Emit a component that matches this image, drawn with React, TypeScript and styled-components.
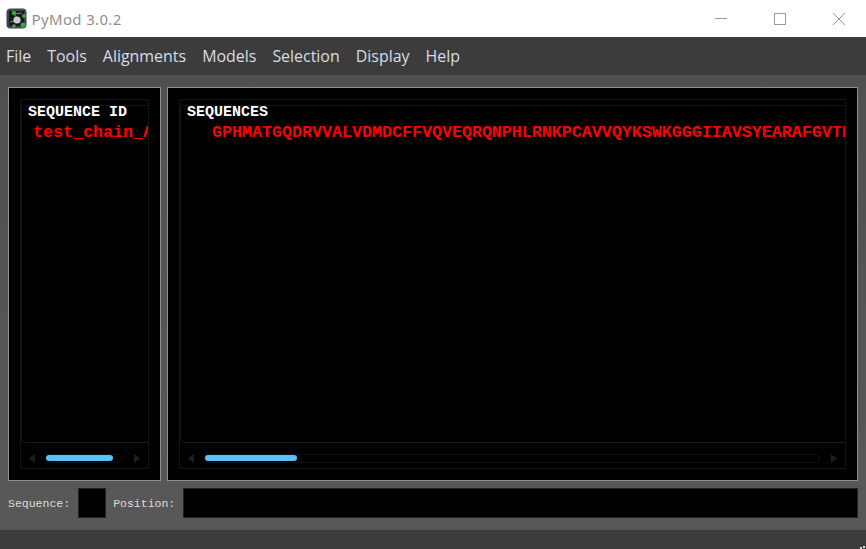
import React from "react";
import styled, { createGlobalStyle } from "styled-components";

const Global = createGlobalStyle`
  html, body { margin: 0; padding: 0; background: #555; }
  body { width: 866px; height: 549px; overflow: hidden; }
`;

const Win = styled.div`
  width: 866px; height: 549px; display: flex; flex-direction: column;
  font-family: "Noto Sans", "Open Sans", sans-serif; background: #555;
`;
const TitleBar = styled.header`
  height: 37px; background: #fff; display: flex; align-items: center; flex: none; padding-left: 6px;
`;
const AppName = styled.span`
  font-size: 15px; color: #8f8f8f; margin-left: 4.5px; font-family: "Noto Sans", sans-serif; letter-spacing: .35px;
`;
const Controls = styled.div`margin-left: auto; display: flex; height: 100%; padding-right: 21px; gap: 47px; align-items: center;`;
const Ctl = styled.svg`display: block;`;
const MenuBar = styled.nav`
  height: 38px; background: #3c3c3c; display: flex; align-items: center; flex: none; padding-left: 6px; gap: 16px;
`;
const MenuItem = styled.span`font-size: 15.95px; color: #d7dde3; font-family: "Open Sans", sans-serif;`;
const Main = styled.main`
  flex: 1; display: flex; flex-direction: column; padding: 12px 8px 0 8px; min-height: 0;
  background: linear-gradient(#505050, #585858);
`;
const Panels = styled.div`display: flex; gap: 6px; height: 394px; flex: none;`;
const Panel = styled.section<{ $w?: number }>`
  ${p => (p.$w ? `width:${p.$w}px;flex:none;` : "flex:1;")}
  background: #000; border: 1px solid #8b9096; box-sizing: border-box; padding: 11px; display: flex; min-width: 0;
`;
const Frame = styled.div`
  flex: 1; border: 1px solid #141414; display: flex; flex-direction: column; padding-top: 5px; min-width: 0;
`;
const View = styled.div`
  flex: 1; position: relative; border-top: 1px solid #141414; border-bottom: 1px solid #1c1c1c;
  border-left: 1px solid #141414; border-bottom-left-radius: 5px; overflow: hidden; min-height: 0;
`;
const Head = styled.div<{ $w: number }>`
  position: absolute; left: -1px; top: -1px; width: ${p => p.$w}px; height: 17px; background: #000;
  font: bold 15px/15px "Liberation Mono", monospace; color: #fff; padding-left: 7px; box-sizing: border-box;
`;
const Seq = styled.div<{ $x: number }>`
  position: absolute; top: 17px; left: ${p => p.$x}px; right: 0; overflow: hidden; white-space: nowrap;
  font: bold 16.67px/20px "Liberation Mono", monospace; color: #f00;
`;
const Bar = styled.div`
  height: 25px; box-sizing: border-box; flex: none; display: flex; align-items: center; padding: 5px 8px 0 8px;
`;
const Track = styled.div`
  flex: 1; height: 7px; margin: 0 11px 0 10px; border: 1px solid #101010; border-radius: 5px; display: flex; align-items: center;
`;
const Thumb = styled.div<{ $w: number }>`
  width: ${p => p.$w}px; height: 6px; background: #5ac2f8; border-radius: 3px;
`;
const Footer = styled.div`display: flex; align-items: center; margin-top: 7px; height: 30px; flex: none;`;
const Label = styled.span<{ $gap: number; $lead?: number }>`
  font: 11.5px "Liberation Mono", monospace; color: #dcdcdc; white-space: nowrap;
  margin: 0 ${p => p.$gap}px 0 ${p => p.$lead ?? 0}px;
`;
const Field = styled.div<{ $w?: number }>`
  ${p => (p.$w ? `width:${p.$w}px;flex:none;` : "flex:1;")}
  height: 30px; background: #000; border: 1px solid #222; box-sizing: border-box;
`;
const Status = styled.footer`height: 19px; flex: none; background: #3c3c3c; position: relative;`;
const Grip = styled.svg`position: absolute; right: 0; bottom: 0;`;

const Logo = () => (
  <svg width="21" height="21" viewBox="0 0 21 21">
    <rect x="0.5" y="0.5" width="20" height="20" rx="4" fill="#3c4650" />
    <rect x="3" y="3" width="15" height="15" fill="#181a1c" />
    <path d="M8 6L14 14M4 14l9-2M8 6l8-1" stroke="#7a8a78" strokeWidth="1" />
    <circle cx="8" cy="5" r="2.2" fill="#38a838" />
    <circle cx="18" cy="8" r="2" fill="#38a838" />
    <circle cx="17" cy="17" r="2.5" fill="#38a838" />
    <circle cx="8" cy="18" r="1.8" fill="#38a838" />
    <circle cx="11" cy="12" r="3.6" fill="#c9cdd0" />
  </svg>
);
const Arrow = ({ dir }: { dir: "l" | "r" }) => (
  <svg width="6" height="9" viewBox="0 0 6 9">
    <path d={dir === "l" ? "M6 0v9L0 4.5z" : "M0 0v9l6-4.5z"} fill="#1e1e1e" />
  </svg>
);

const SEQ = "GPHMATGQDRVVALVDMDCFFVQVEQRQNPHLRNKPCAVVQYKSWKGGGIIAVSYEARAFGVTRSMWADDAKKLCPDLLLAQVRESRGKANLTKYREASVEVMEIMSRFAVIERASIDEAYVDLTSAVQERLQKLQGQPISADLLPSTYIEGLPQGPTTAEETVQKEGMRKQGLFQWLDSLQIDNLTSPDLQLTVGAVIVEEMRAAIERETGFQCSAGISHNKVLAKLACGLNKPNRQTLVSHGSVPQLFSQMPIRKIRSLGGKLGASVIEILGIEYMGELTQFTESQLQSHFGEKNGSWLYAMCRGIEHDPVKPRQLPKTIGCSKNFPGKTALATREQVQWWLLQLAQELEERLTKDRNDNDRVATQLVVSIRVQGDKRLSSLRRCCALTRYDAHKMSHDAFTVIKNCNTSGIQTEWSPPLTMLFLCATKFSAS";

export default function App() {
  return (
    <Win>
      <Global />
      <TitleBar>
        <Logo />
        <AppName>PyMod 3.0.2</AppName>
        <Controls>
          <Ctl width="12" height="12" viewBox="0 0 12 12"><path d="M0 5.5h12" stroke="#9a9a9a" /></Ctl>
          <Ctl width="12" height="12" viewBox="0 0 12 12"><rect x=".5" y=".5" width="11" height="11" fill="none" stroke="#9a9a9a" /></Ctl>
          <Ctl width="12" height="12" viewBox="0 0 12 12"><path d="M0 0l12 12M12 0L0 12" stroke="#9a9a9a" /></Ctl>
        </Controls>
      </TitleBar>
      <MenuBar>
        {["File", "Tools", "Alignments", "Models", "Selection", "Display", "Help"].map(m => (
          <MenuItem key={m}>{m}</MenuItem>
        ))}
      </MenuBar>
      <Main>
        <Panels>
          <Panel $w={153}>
            <Frame>
              <View>
                <Head $w={115}>SEQUENCE ID</Head>
                <Seq $x={11}>test_chain_A</Seq>
              </View>
              <Bar>
                <Arrow dir="l" />
                <Track><Thumb $w={67} /></Track>
                <Arrow dir="r" />
              </Bar>
            </Frame>
          </Panel>
          <Panel>
            <Frame>
              <View>
                <Head $w={97}>SEQUENCES</Head>
                <Seq $x={31}>{SEQ}</Seq>
              </View>
              <Bar>
                <Arrow dir="l" />
                <Track><Thumb $w={92} /></Track>
                <Arrow dir="r" />
              </Bar>
            </Frame>
          </Panel>
        </Panels>
        <Footer>
          <Label $gap={8}>Sequence:</Label>
          <Field $w={28} />
          <Label $gap={8} $lead={7}>Position:</Label>
          <Field />
        </Footer>
      </Main>
      <Status>
        <Grip width="6" height="6" viewBox="0 0 6 6"><path d="M3 3h2v2H3zM0 4h2v2H0z" fill="#ddd" /></Grip>
      </Status>
    </Win>
  );
}
